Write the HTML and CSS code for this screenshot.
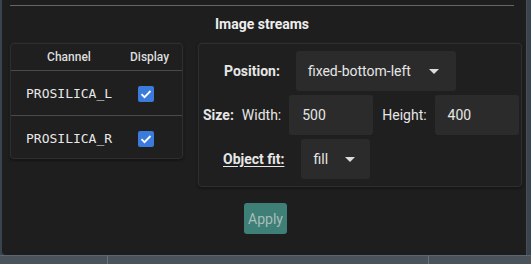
FILE: index.html
```html
<!DOCTYPE html>
<html lang="en">
<head>
  <meta charset="UTF-8">
  <title>Image streams</title>
  <link rel="stylesheet" href="styles.css">
</head>
<body>
  <div class="window">
    <hr class="top-rule">
    <h2 class="title">Image streams</h2>
    <div class="panels">
      <div class="card channels">
        <div class="ch-row ch-head">
          <span class="ch-name">Channel</span>
          <span class="ch-show">Display</span>
        </div>
        <div class="ch-row">
          <span class="ch-name mono">PROSILICA_L</span>
          <span class="ch-show"><span class="check"><svg viewBox="0 0 16 16" width="16" height="16"><path d="M3.5 8.2l3 3 6-6.2" fill="none" stroke="#fff" stroke-width="1.8"/></svg></span></span>
        </div>
        <div class="ch-row last">
          <span class="ch-name mono">PROSILICA_R</span>
          <span class="ch-show"><span class="check"><svg viewBox="0 0 16 16" width="16" height="16"><path d="M3.5 8.2l3 3 6-6.2" fill="none" stroke="#fff" stroke-width="1.8"/></svg></span></span>
        </div>
      </div>
      <div class="card settings">
        <div class="row row-pos">
          <span class="label bold">Position:</span>
          <div class="field select pos-select">fixed-bottom-left<span class="caret"></span></div>
        </div>
        <div class="row row-size">
          <span class="label bold">Size:</span>
          <span class="label sub">Width:</span>
          <div class="field num">500</div>
          <span class="label sub h-label">Height:</span>
          <div class="field num">400</div>
        </div>
        <div class="row row-fit">
          <span class="label bold underline">Object fit:</span>
          <div class="field select fit-select">fill<span class="caret"></span></div>
        </div>
      </div>
    </div>
    <div class="actions">
      <button class="apply-btn">Apply</button>
    </div>
  </div>
  <div class="dock">
    <span class="dock-cell first"></span>
    <span class="dock-cell"></span>
  </div>
</body>
</html>
```

FILE: styles.css
```css
body {
  margin: 0;
  background: #3a444e;
  font-family: Roboto, "Liberation Sans", Arial, sans-serif;
  color: #e6e6e6;
  width: 531px;
  height: 264px;
  overflow: hidden;
}
.window {
  margin-left: 2px;
  width: 525px;
  height: 255px;
  background: #1e1e1e;
  border-bottom-left-radius: 4px;
  border-right: 1px solid #4a4f55;
  box-sizing: border-box;
  padding: 5px 0 0 8px;
}
.top-rule {
  margin: 0;
  width: 504px;
  border: none;
  border-top: 1px solid #666;
  height: 0;
}
.title {
  margin: 0;
  height: 37px;
  line-height: 36px;
  font-size: 14px;
  font-weight: 700;
  text-align: center;
  color: #eee;
  padding-right: 12px;
}
.panels {
  display: flex;
  align-items: flex-start;
  gap: 15px;
}
.card {
  background: #1f1f1f;
  border: 1px solid #2e2e2e;
  border-radius: 4px;
  box-shadow: 0 1px 3px rgba(0,0,0,0.6), 0 0 0 1px rgba(255,255,255,0.04);
  box-sizing: border-box;
}
.channels {
  width: 173px;
  height: 116px;
}
.ch-row {
  display: flex;
  align-items: center;
  height: 44px;
  border-bottom: 1px solid #4a4a4a;
}
.ch-row.last {
  border-bottom: none;
}
.ch-head {
  height: 26px;
  font-size: 12px;
  font-weight: 500;
  color: #ddd;
}
.ch-name {
  width: 116px;
  box-sizing: border-box;
  text-align: center;
}
.ch-name.mono {
  text-align: left;
  padding-left: 15px;
  font-family: "DejaVu Sans Mono", "Liberation Mono", monospace;
  font-size: 13px;
  color: #e8e8e8;
}
.ch-show {
  width: 37px;
  text-align: center;
}
.ch-head .ch-show {
  padding-left: 3px;
}
.check {
  display: inline-block;
  width: 16px;
  height: 16px;
  background: #3b7bdb;
  border-radius: 2px;
  vertical-align: middle;
}
.check svg {
  display: block;
}
.settings {
  width: 324px;
  height: 144px;
  padding-top: 7px;
  display: flex;
  flex-direction: column;
  gap: 4px;
}
.row {
  display: flex;
  align-items: center;
  height: 40px;
}
.label {
  font-size: 14px;
  color: #e6e6e6;
}
.bold {
  font-weight: 700;
}
.underline {
  text-decoration: underline;
  text-underline-offset: 2px;
}
.field {
  height: 40px;
  background: #2b2b2b;
  border-radius: 3px;
  box-sizing: border-box;
  font-size: 14px;
  color: #e6e6e6;
  display: flex;
  align-items: center;
  padding-left: 13px;
}
.row-pos {
  padding-left: 25px;
}
.pos-select {
  margin-left: 16px;
  width: 160px;
  padding-left: 12px;
}
.row-size {
  padding-left: 4px;
}
.sub {
  margin-left: 8px;
}
.num {
  margin-left: 8px;
  width: 84px;
}
.h-label {
  margin-left: 9px;
}
.row-fit {
  padding-left: 24px;
}
.fit-select {
  margin-left: 17px;
  width: 69px;
  padding-left: 12px;
}
.caret {
  margin-left: auto;
  margin-right: 17px;
  width: 0;
  height: 0;
  border-left: 5px solid transparent;
  border-right: 5px solid transparent;
  border-top: 5px solid #ddd;
}
.fit-select .caret {
  margin-right: 15px;
}
.actions {
  padding: 16px 0 0 234px;
}
.apply-btn {
  width: 43px;
  height: 31px;
  padding: 0;
  border: none;
  border-radius: 3px;
  background: #3e7f77;
  color: #a9bdb9;
  font-family: inherit;
  font-size: 14px;
}
.dock {
  display: flex;
  height: 9px;
  border-top: 1px solid #5d666e;
  background: #4a525a;
}
.dock-cell {
  width: 320px;
  border-right: 1px solid #6a737b;
}
.dock-cell.first {
  width: 107px;
}
```
